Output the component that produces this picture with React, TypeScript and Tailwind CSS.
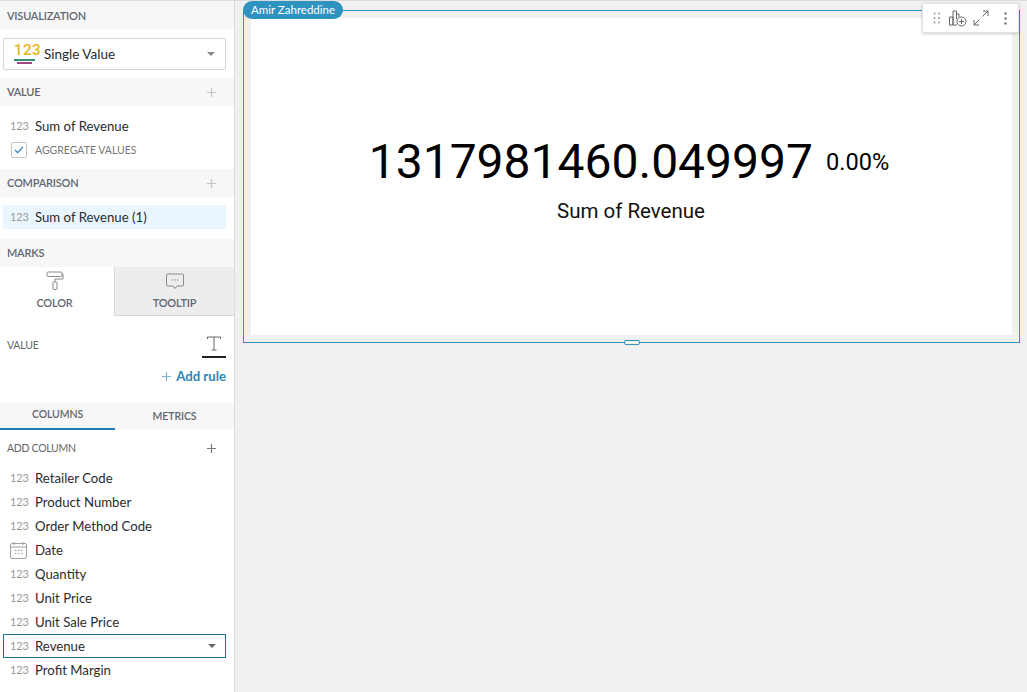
import React from "react";

const numCls = "text-[11px] leading-none text-[#9a9a9a] tracking-[-0.1px] shrink-0 pb-[2px]";

const N = () => <span className={`w-[35px] pl-[10px] ${numCls}`}>123</span>;

const Caret = ({ c = "#666" }: { c?: string }) => (
  <svg width="8" height="4" viewBox="0 0 8 4" className="shrink-0"><path d="M0 0h8L4 4z" fill={c} /></svg>
);

const Plus = ({ c = "#c4c4c4" }: { c?: string }) => (
  <svg width="9" height="9" viewBox="0 0 9 9"><path d="M4.5 0v9M0 4.5h9" stroke={c} strokeWidth="1.2" /></svg>
);

const Header = ({ label, plus }: { label: string; plus?: boolean }) => (
  <div className="h-[28px] bg-[#f7f7f7] flex items-center justify-between pl-[7px] pr-[18px]">
    <span className="text-[11px] font-semibold tracking-[-0.2px] text-[#5f6670]">{label}</span>
    {plus && <Plus />}
  </div>
);

const Row = ({ label }: { label: string }) => (
  <div className="h-[24px] flex items-center text-[13.2px] text-[#2b2b2b]">
    {label === "Date" ? (
      <span className="w-[35px] pl-[10px] shrink-0">
        <svg width="17" height="17" viewBox="0 0 17 17" fill="none" stroke="#999" strokeWidth="0.9">
          <rect x="0.5" y="1.5" width="16" height="15" rx="1.5" />
          <path d="M0.5 5h16M4 0v3M13 0v3" />
          <path d="M5 8.5h1.5M8 8.5h1.5M11 8.5h1.5M5 11.5h1.5M8 11.5h1.5M11 11.5h1.5" strokeWidth="1.2" />
        </svg>
      </span>
    ) : <N />}
    <span className="pt-[2px]">{label}</span>
  </div>
);

export default function App() {
  return (
    <div className="w-[1027px] h-[692px] overflow-hidden flex bg-[#f0f0f0] border-t border-[#dcdcdc]" style={{ fontFamily: "Lato, 'Noto Sans', sans-serif" }}>
      <aside className="w-[235px] shrink-0 h-full bg-white border-r border-[#dcdcdc] flex flex-col">
        <div className="h-[29px] bg-[#f7f7f7] flex items-center pl-[7px] pt-[2px]">
          <span className="text-[11px] font-semibold tracking-[-0.2px] text-[#5f6670]">VISUALIZATION</span>
        </div>
        <div className="pt-[8px] pb-[8px] pl-[3px] pr-[8px]">
          <div className="h-[32px] border border-[#d5d5d5] rounded-[2px] flex items-center pl-[10px] pr-[10px]">
            <div className="w-[30px] flex flex-col shrink-0 -mt-[1px]">
              <span className="text-[15px] leading-[14px] font-medium text-[#e6b71e] tracking-[0.5px]" style={{ fontFamily: "Roboto" }}>123</span>
              <span className="block w-[21px] h-[2px] bg-[#3a8a78] mt-[2px]" />
              <span className="block w-[15px] h-[1.5px] bg-[#a0478a] mt-[1px] ml-[3px]" />
            </div>
            <span className="text-[13.5px] text-[#2b2b2b] flex-1">Single Value</span>
            <Caret c="#888" />
          </div>
        </div>
        <Header label="VALUE" plus />
        <div className="h-[63px] pt-[8px]">
          <Row label="Sum of Revenue" />
          <div className="flex items-center h-[16px] mt-[4px]">
            <span className="ml-[11px] w-[16px] h-[16px] border border-[#c4c4c4] rounded-[2px] flex items-center justify-center">
              <svg width="10" height="8" viewBox="0 0 10 8" fill="none"><path d="M1 4l2.6 2.6L9 1" stroke="#2a7fb0" strokeWidth="1.1" /></svg>
            </span>
            <span className="ml-[8px] text-[10.5px] text-[#777] pt-[2px]">AGGREGATE VALUES</span>
          </div>
        </div>
        <Header label="COMPARISON" plus />
        <div className="h-[42px] pt-[8px] pl-[3px] pr-[8px]">
          <div className="h-[24px] bg-[#eaf6fd] flex items-center text-[13.2px] text-[#2b2b2b]">
            <span className={`w-[32px] pl-[7px] ${numCls}`}>123</span>
            <span className="pt-[2px]">Sum of Revenue (1)</span>
          </div>
        </div>
        <Header label="MARKS" />
        <div className="h-[49px] flex">
          <div className="w-[114px] flex flex-col items-center pt-[4px] pr-[5px] bg-white">
            <svg width="18" height="20" viewBox="0 0 18 20" fill="none" stroke="#8a8a8a" strokeWidth="1">
              <rect x="1" y="1" width="15" height="4.5" rx="1" />
              <path d="M16 3h1v5H9v3" />
              <rect x="7" y="11" width="4" height="7.5" rx="0.5" />
            </svg>
            <span className="text-[11px] font-semibold tracking-[-0.2px] text-[#5f6670] mt-[4px] leading-[16px]">COLOR</span>
          </div>
          <div className="flex-1 flex flex-col items-center pt-[6px] bg-[#ededed] border-l border-b border-[#d8d8d8]">
            <svg width="18" height="17" viewBox="0 0 18 17" fill="none" stroke="#8a8a8a" strokeWidth="1">
              <path d="M1.5 1h15a1 1 0 0 1 1 1v10a1 1 0 0 1-1 1H11l-2 2.5L7 13H1.5a1 1 0 0 1-1-1V2a1 1 0 0 1 1-1z" />
              <path d="M5.5 7h1.5M8.3 7h1.5M11 7h1.5" strokeWidth="1.1" />
            </svg>
            <span className="text-[11px] font-semibold tracking-[-0.2px] text-[#5f6670] mt-[5px] leading-[16px]">TOOLTIP</span>
          </div>
        </div>
        <div className="h-[86px] flex flex-col">
          <div className="flex items-center justify-between pl-[7px] pr-[8px] pt-[20px]">
            <span className="text-[10.5px] text-[#666] tracking-[-0.2px] pb-[3px]">VALUE</span>
            <span className="w-[24px] flex flex-col items-center">
              <svg width="14" height="16" viewBox="0 0 14 16" fill="none" stroke="#666" strokeWidth="1">
                <path d="M0.5 3V1h13v2M7 1v13M4.5 14h5" />
              </svg>
              <span className="block w-[24px] h-[2px] bg-[#222] mt-[4px]" />
            </span>
          </div>
          <div className="flex items-center justify-end gap-[5px] pr-[8px] mt-[9px]">
            <Plus c="#7db6d4" />
            <span className="text-[13.2px] font-bold text-[#2a86b8]">Add rule</span>
          </div>
        </div>
        <div className="h-[28px] flex bg-[#f7f7f7]">
          <div className="w-[115px] h-full border-b-2 border-[#1f7fb0] flex items-center justify-center">
            <span className="text-[10.5px] font-semibold tracking-[-0.1px] text-[#5f6670]">COLUMNS</span>
          </div>
          <div className="flex-1 flex items-center justify-center pt-[2px]">
            <span className="text-[10.5px] font-semibold tracking-[-0.1px] text-[#5f6670]">METRICS</span>
          </div>
        </div>
        <div className="h-[36px] flex items-center justify-between pl-[7px] pr-[18px]">
          <span className="text-[10.5px] text-[#666] tracking-[-0.3px] pt-[2px]">ADD COLUMN</span>
          <Plus c="#777" />
        </div>
        <div className="flex flex-col">
          <Row label="Retailer Code" />
          <Row label="Product Number" />
          <Row label="Order Method Code" />
          <Row label="Date" />
          <Row label="Quantity" />
          <Row label="Unit Price" />
          <Row label="Unit Sale Price" />
          <div className="h-[24px] ml-[3px] mr-[8px] border border-[#1f6f9a] flex items-center text-[13.2px] text-[#2b2b2b] pr-[9px]">
            <span className={`w-[31px] pl-[6px] ${numCls}`}>123</span>
            <span className="flex-1 pt-[2px]">Revenue</span>
            <Caret />
          </div>
          <Row label="Profit Margin" />
        </div>
      </aside>
      <main className="flex-1 pl-[8px] pr-[7px] pt-[9px]">
        <div className="relative h-[333px] border border-[#2e93bf] p-[7px]">
          <span className="absolute -top-[10px] -left-[1px] h-[18px] px-[8px] rounded-[9px] bg-[#2e93bf] text-white text-[11.5px] leading-[17px] whitespace-nowrap">Amir Zahreddine</span>
          <div className="absolute -top-[8px] right-[0px] h-[30px] w-[97px] bg-white border border-[#e3e3e3] rounded-[2px] shadow-[0_1px_3px_rgba(0,0,0,0.2)] flex items-center pl-[10px]">
            <svg width="8" height="12" viewBox="0 0 8 12" fill="#999" className="shrink-0"><circle cx="1.5" cy="1.5" r="1" /><circle cx="6" cy="1.5" r="1" /><circle cx="1.5" cy="6" r="1" /><circle cx="6" cy="6" r="1" /><circle cx="1.5" cy="10.5" r="1" /><circle cx="6" cy="10.5" r="1" /></svg>
            <svg width="18" height="17" viewBox="0 0 18 17" fill="none" stroke="#666" strokeWidth="1" className="ml-[8px] shrink-0">
              <path d="M0.5 15V7h3.5v8M4 15V1h3.5v8M0 15h8M7.5 4h2.5v3" />
              <circle cx="12.5" cy="11.5" r="4.5" />
              <path d="M12.5 9v5M10 11.5h5" />
            </svg>
            <svg width="16" height="16" viewBox="0 0 16 16" fill="none" stroke="#666" strokeWidth="1" className="ml-[6px] shrink-0"><path d="M9.5 6.5L15 1M10 1h5v5M6.5 9.5L1 15M1 10v5h5" /></svg>
            <svg width="3" height="13" viewBox="0 0 3 13" fill="#777" className="ml-[15px] shrink-0"><circle cx="1.5" cy="1.5" r="1.2" /><circle cx="1.5" cy="6.5" r="1.2" /><circle cx="1.5" cy="11.5" r="1.2" /></svg>
          </div>
          <span className="absolute -bottom-[3px] left-1/2 -translate-x-1/2 w-[16px] h-[5px] bg-[#f0f0f0] border border-[#2e93bf] rounded-[2px]" />
          <div className="h-full bg-white flex flex-col items-center pt-[114px]" style={{ fontFamily: "Roboto, sans-serif" }}>
            <div className="flex items-center gap-[13px] text-black -ml-[5px]">
              <span className="text-[48px] leading-[60px]">1317981460.049997</span>
              <span className="text-[23.6px] leading-[28px]">0.00%</span>
            </div>
            <div className="text-[20.5px] leading-[24px] text-[#111] mt-[7px] -ml-[1px]">Sum of Revenue</div>
          </div>
        </div>
      </main>
    </div>
  );
}
